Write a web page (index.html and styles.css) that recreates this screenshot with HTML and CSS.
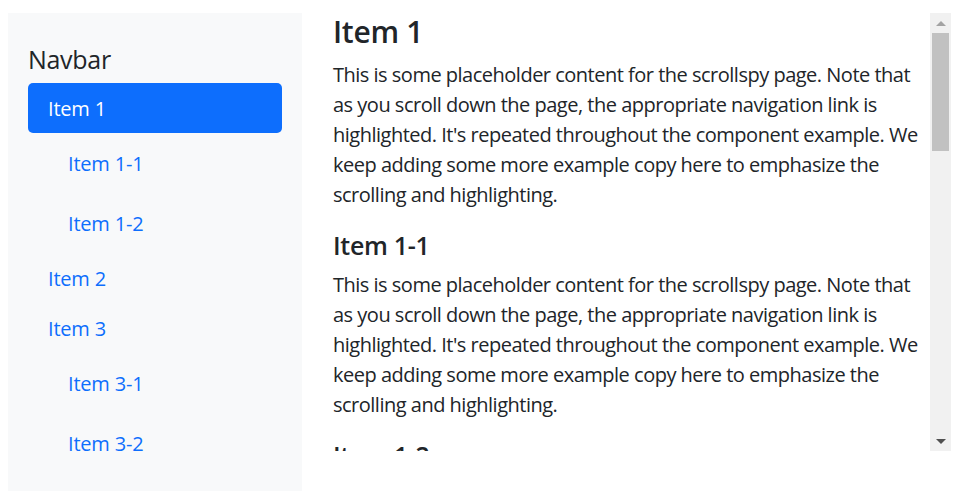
FILE: index.html
```html
<!DOCTYPE html>
<html lang="en">
<head>
<meta charset="utf-8">
<title>Scrollspy</title>
<link rel="stylesheet" href="styles.css">
</head>
<body>
<div class="page">
  <aside class="sidebar">
    <a class="brand" href="#">Navbar</a>
    <nav class="nav">
      <a class="nav-link active" href="#item-1">Item 1</a>
      <nav class="nav">
        <a class="nav-link sub" href="#item-1-1">Item 1-1</a>
        <a class="nav-link sub" href="#item-1-2">Item 1-2</a>
      </nav>
      <a class="nav-link" href="#item-2">Item 2</a>
      <a class="nav-link" href="#item-3">Item 3</a>
      <nav class="nav">
        <a class="nav-link sub" href="#item-3-1">Item 3-1</a>
        <a class="nav-link sub" href="#item-3-2">Item 3-2</a>
      </nav>
    </nav>
  </aside>
  <div class="viewport">
    <div class="content">
      <div id="item-1">
        <h4>Item 1</h4>
        <p>This is some placeholder content for the scrollspy page. Note that as you scroll down the page, the appropriate navigation link is highlighted. It's repeated throughout the component example. We keep adding some more example copy here to emphasize the scrolling and highlighting.</p>
      </div>
      <div id="item-1-1">
        <h5>Item 1-1</h5>
        <p>This is some placeholder content for the scrollspy page. Note that as you scroll down the page, the appropriate navigation link is highlighted. It's repeated throughout the component example. We keep adding some more example copy here to emphasize the scrolling and highlighting.</p>
      </div>
      <div id="item-1-2">
        <h5>Item 1-2</h5>
        <p>This is some placeholder content for the scrollspy page. Note that as you scroll down the page, the appropriate navigation link is highlighted. It's repeated throughout the component example. We keep adding some more example copy here to emphasize the scrolling and highlighting.</p>
      </div>
    </div>
    <div class="scrollbar">
      <div class="arrow up"></div>
      <div class="track"><div class="thumb"></div></div>
      <div class="arrow down"></div>
    </div>
  </div>
</div>
</body>
</html>
```
FILE: styles.css
```css
* { box-sizing: border-box; }
html, body { margin: 0; padding: 0; background: #fff; }
body {
  font-family: "Open Sans", "Noto Sans", sans-serif;
  font-size: 20px;
  line-height: 1.5;
  color: #212529;
  letter-spacing: -0.5px;
}
.page {
  display: flex;
  align-items: flex-start;
  padding: 13px 11px 0 8px;
  gap: 19px;
}
.sidebar {
  width: 294px;
  flex: 0 0 294px;
  background: #f8f9fa;
  padding: 20px 20px 18px 20px;
  display: flex;
  flex-direction: column;
}
.brand {
  font-size: 25px;
  line-height: 37.5px;
  padding: 8px 0 4.5px;
  color: #212529;
  text-decoration: none;
  letter-spacing: -0.3px;
}
.nav {
  display: flex;
  flex-direction: column;
}
.nav-link {
  display: block;
  padding: 11px 20px 9px;
  line-height: 30px;
  color: #0d6efd;
  text-decoration: none;
  border-radius: 5px;
  letter-spacing: -0.2px;
}
.nav-link.active {
  background: #0d6efd;
  color: #fff;
}
.nav-link.sub {
  margin: 5px 0 5px 20px;
}
.viewport {
  flex: 1;
  height: 438px;
  display: flex;
}
.content {
  flex: 1;
  overflow: hidden;
  padding: 1px 8px 0 12px;
}
h4, h5 {
  margin: 0 0 10px;
  font-weight: 600;
  line-height: 1.2;
  letter-spacing: -0.3px;
}
h4 { font-size: 30px; }
h5 { font-size: 25px; }
p { margin: 0 0 20px; }
.scrollbar {
  width: 21px;
  flex: 0 0 21px;
  background: #f1f1f1;
  display: flex;
  flex-direction: column;
}
.arrow {
  height: 20px;
  display: flex;
  align-items: center;
  justify-content: center;
}
.arrow::before {
  content: "";
  width: 0;
  height: 0;
  border-left: 5px solid transparent;
  border-right: 5px solid transparent;
}
.arrow.up::before { border-bottom: 5px solid #a3a3a3; }
.arrow.down::before { border-top: 5px solid #505050; }
.track {
  flex: 1;
  padding: 0 2px;
}
.thumb {
  height: 118px;
  background: #c1c1c1;
}
```
